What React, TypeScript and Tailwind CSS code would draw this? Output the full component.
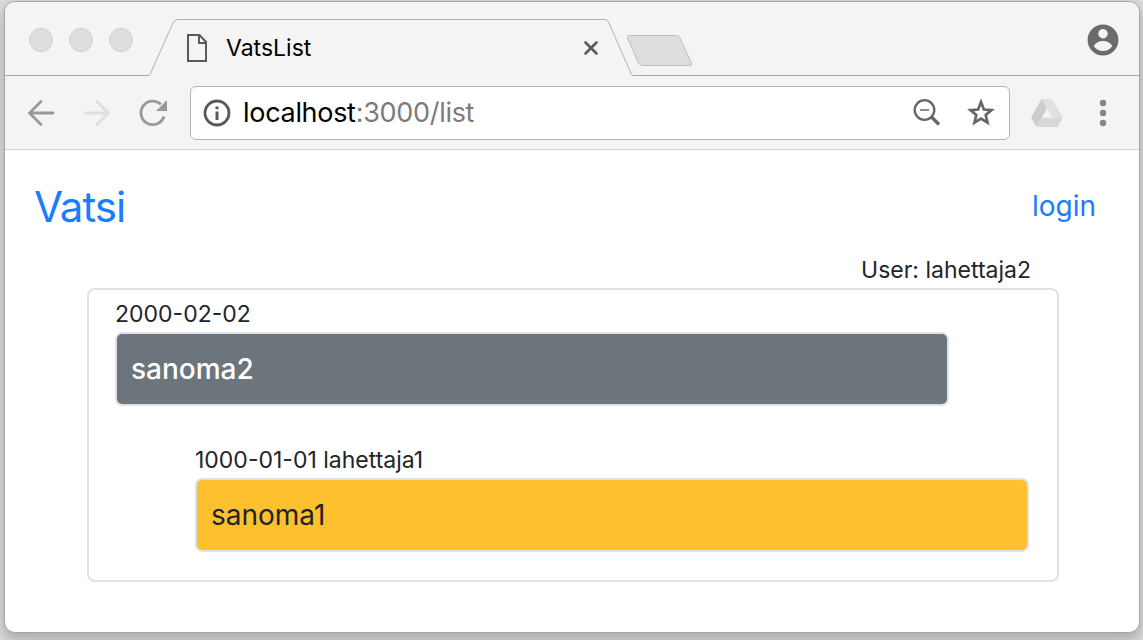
import type { ReactNode } from "react";

function Icon({ w, h, className = "", children }: { w: number; h: number; className?: string; children: ReactNode }) {
  return (
    <svg width={w} height={h} viewBox={`0 0 ${w} ${h}`} fill="none" className={`block shrink-0 ${className}`}>
      {children}
    </svg>
  );
}

function TabStrip() {
  return (
    <div className="flex h-[74px] items-end">
      <div className="flex h-full w-[144px] items-center gap-4 border-b border-[#a8a8a8] pb-[0px] pl-6">
        {[0, 1, 2].map((i) => (
          <span key={i} className="mt-[3px] size-6 rounded-full border border-[#cdcdcd] bg-[#dedede]" />
        ))}
      </div>
      <div className="relative h-[57px] w-[484px]">
        <svg width="484" height="57" viewBox="0 0 484 57" fill="none" className="absolute inset-0">
          <path d="M0 56.5Q.8 56 1.4 54.5L24 4Q26 .5 28 .5H456Q458.500 .5 460 4L482 54.5Q483 56.500 484 56.5" stroke="#b0b0b0" />
        </svg>
        <div className="relative flex h-full items-center pr-[34px] pl-[38px]">
          <Icon w={20} h={28}>
            <path d="M1 1H12.500L19 8V27H1Z M12 1V9H19" stroke="#5a5a5c" strokeWidth="2" />
          </Icon>
          <span className="ml-[19px] flex-1 text-[23px] leading-7 tracking-[0px] text-black">VatsList</span>
          <Icon w={16} h={16}>
            <path d="M2.500 2.500L13.500 13.500M13.500 2.500L2.500 13.500" stroke="#5a5a5c" strokeWidth="2.600" strokeLinecap="round" />
          </Icon>
        </div>
      </div>
      <div className="flex h-full flex-1 justify-between border-b border-[#a8a8a8] pr-5">
        <Icon w={68} h={34} className="-ml-[7px] mt-[32px]">
          <path d="M3 1.500H50.500Q53 1.500 54 4L65.300 29Q66.500 31.500 64 31.500H17Q14 31.500 12.500 29L1.500 4Q.8 1.500 3 1.500Z" fill="#ddd" stroke="#bebebe" />
        </Icon>
        <Icon w={32} h={32} className="mt-[22px]">
          <circle cx="16" cy="16" r="15.400" fill="#6b6b6b" />
          <circle cx="16" cy="9.800" r="4.700" fill="#f4f4f4" />
          <path d="M6.700 22Q10 17 16 17T25.300 22Q22 27 16 27T6.700 22Z" fill="#f4f4f4" />
        </Icon>
      </div>
    </div>
  );
}

function Toolbar() {
  return (
    <div className="flex h-[74px] items-center border-b border-[#d2d2d2] pl-[22px]">
      <Icon w={28} h={28}>
        <path d="M26 14H3M14 2.500L2.500 14L14 25.500" stroke="#999" strokeWidth="2.800" strokeLinecap="round" />
      </Icon>
      <Icon w={28} h={28} className="ml-7">
        <path d="M2 14H25M14 2.500L25.500 14L14 25.500" stroke="#dfdfdf" strokeWidth="2.800" strokeLinecap="round" />
      </Icon>
      <Icon w={28} h={28} className="ml-7">
        <path d="M25 17.500A11.800 11.800 0 1 1 21.800 5.200" stroke="#999" strokeWidth="2.800" />
        <path d="M28 1V12H17Z" fill="#999" />
      </Icon>
      <div className="ml-[23px] flex h-[54px] w-[820px] items-center rounded-[6px] border border-[#b4b4b4] bg-white pl-3">
        <Icon w={28} h={28}>
          <circle cx="14" cy="14" r="12" stroke="#5a5a5c" strokeWidth="2.800" />
          <path d="M14 7.500V10.300M14 12.500V21" stroke="#5a5a5c" strokeWidth="3" />
        </Icon>
        <span className="ml-[12px] flex-1 text-[27px] leading-8 tracking-[-0.3px] text-black">
          localhost<span className="text-[#7b7b7b]">:3000/list</span>
        </span>
        <Icon w={28} h={28} className="mr-[25px]">
          <circle cx="11.500" cy="11" r="9.800" stroke="#666" strokeWidth="2.300" />
          <path d="M7 11H16" stroke="#666" strokeWidth="1.600" />
          <path d="M18.500 18L26 25.500" stroke="#666" strokeWidth="3.400" />
        </Icon>
        <Icon w={30} h={30} className="mr-[13px]">
          <path d="M15 4L17.900 11.500L25.500 12.100L19.700 17L21.500 24.600L15 20.600L8.500 24.600L10.300 17L4.500 12.100L12.100 11.500Z" stroke="#666" strokeWidth="2.700" />
        </Icon>
      </div>
      <Icon w={34} h={30} className="ml-5">
        <path d="M11.500 1H22L32.800 19.500H22.500Z" fill="#e0e0e0" />
        <path d="M11.500 1L17 10.500L6.500 29L1 19.500Z" fill="#cdcdcd" />
        <path d="M12 19.500H33L27.500 29H6.500Z" fill="#d8d8d8" />
        <path d="M17 12.800L21 19.500H13.200Z" fill="#f4f4f4" />
      </Icon>
      <Icon w={8} h={28} className="ml-[35px]">
        <circle cx="4" cy="4" r="3.200" fill="#858585" />
        <circle cx="4" cy="14" r="3.200" fill="#858585" />
        <circle cx="4" cy="24" r="3.200" fill="#858585" />
      </Icon>
    </div>
  );
}

function Message({ meta, text, className, bubble }: { meta: string; text: string; className: string; bubble: string }) {
  return (
    <div className={`w-[834px] ${className}`}>
      <div className="h-[36px] text-[23px] leading-[36px] whitespace-nowrap">{meta}</div>
      <div className={`flex h-[74px] items-center rounded-[7px] border-2 border-[#dee2e6] pl-[14px] text-[28px] leading-10 ${bubble}`}>
        {text}
      </div>
    </div>
  );
}

export default function App() {
  return (
    <div className="h-[640px] w-[1143px] overflow-hidden bg-[#dedede] pt-px pl-1 font-['Inter','Liberation_Sans',sans-serif] text-[#212529]">
      <div className="h-[632px] w-[1136px] overflow-hidden rounded-[11px] border border-[#a6a6a6] bg-white shadow-[0_6px_14px_2px_rgba(0,0,0,0.22)]">
        <div className="bg-[#f4f4f4]">
          <TabStrip />
          <Toolbar />
        </div>
        <header className="flex h-[104px] justify-between pr-[43px] pl-[29px] text-[#1a7dff]">
          <a className="mt-[32px] text-[42px] leading-[50px] tracking-[-1px]">Vatsi</a>
          <a className="mt-[38px] text-[28px] leading-[36px]">login</a>
        </header>
        <main className="ml-[82px] w-[972px]">
          <div className="h-[34px] pr-7 text-right text-[23px] leading-[32px]">User: lahettaja2</div>
          <section className="h-[294px] rounded-[8px] border-2 border-[#dee2e6] pt-[6px] pl-[26px]">
            <Message meta="2000-02-02" text="sanoma2" className="" bubble="bg-[#6c757c] text-white font-medium" />
            <Message meta="1000-01-01 lahettaja1" text="sanoma1" className="mt-9 ml-20" bubble="bg-[#fdc02f]" />
          </section>
        </main>
      </div>
    </div>
  );
}
